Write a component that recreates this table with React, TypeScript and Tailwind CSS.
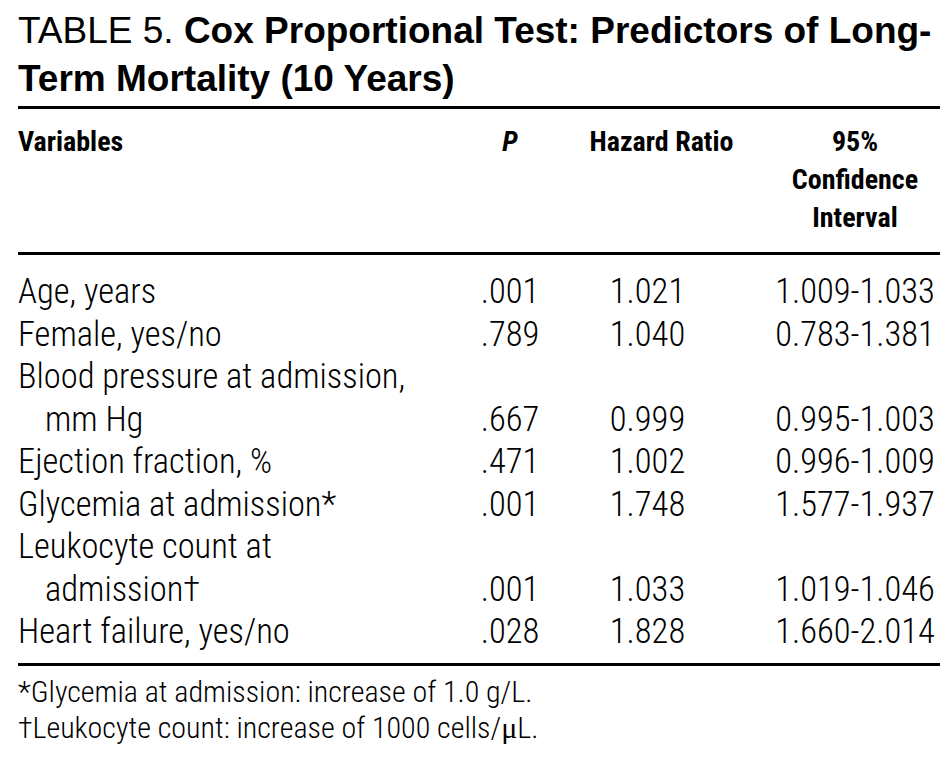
type Row = { label: string; indent?: boolean; p?: string; hr?: string; ci?: string };

const rows: Row[] = [
  { label: "Age, years", p: ".001", hr: "1.021", ci: "1.009-1.033" },
  { label: "Female, yes/no", p: ".789", hr: "1.040", ci: "0.783-1.381" },
  { label: "Blood pressure at admission," },
  { label: "mm Hg", indent: true, p: ".667", hr: "0.999", ci: "0.995-1.003" },
  { label: "Ejection fraction, %", p: ".471", hr: "1.002", ci: "0.996-1.009" },
  { label: "Glycemia at admission*", p: ".001", hr: "1.748", ci: "1.577-1.937" },
  { label: "Leukocyte count at" },
  { label: "admission†", indent: true, p: ".001", hr: "1.033", ci: "1.019-1.046" },
  { label: "Heart failure, yes/no", p: ".028", hr: "1.828", ci: "1.660-2.014" },
];

const cols = "grid grid-cols-[452px_80px_195px_195px]";

export default function App() {
  return (
    <div className="min-h-screen bg-white text-black pl-[18px] pr-[10px] pt-[7px]">
      <h1 className="font-['Liberation_Sans',sans-serif] text-[37px] leading-[48px] whitespace-nowrap">
        <div>
          TABLE 5. <span className="font-bold">Cox Proportional Test: Predictors of Long-</span>
        </div>
        <div className="font-bold">Term Mortality (10 Years)</div>
      </h1>

      <div className="mt-[3px] h-[3px] bg-black" />

      <div className="font-['Roboto',sans-serif] font-stretch-condensed">
        <div className={`${cols} pt-[14px] pb-[15px] text-[28px] leading-[38px] font-bold`}>
          <div>Variables</div>
          <div className="text-center italic">P</div>
          <div className="text-center pl-[28px]">Hazard Ratio</div>
          <div className="text-center pl-[25px]">
            95%
            <br />
            Confidence
            <br />
            Interval
          </div>
        </div>

        <div className="h-[3px] bg-black" />

        <div className="pt-[15px] pb-[10px] text-[34.5px] leading-[42.5px] font-[350]">
          {rows.map((r, i) => (
            <div key={i} className={cols}>
              <div className={r.indent ? "pl-[27px] whitespace-nowrap" : "whitespace-nowrap"}>{r.label}</div>
              <div className="text-center">{r.p}</div>
              <div className="text-center">{r.hr}</div>
              <div className="text-center pl-[25px]">{r.ci}</div>
            </div>
          ))}
        </div>

        <div className="h-[3px] bg-black" />

        <div className="pt-[8px] text-[30px] leading-[36px] font-[350]">
          <div>*Glycemia at admission: increase of 1.0 g/L.</div>
          <div>
            †Leukocyte count: increase of 1000 cells/<span className="font-['Liberation_Serif',serif] font-normal">μ</span>L.
          </div>
        </div>
      </div>
    </div>
  );
}
